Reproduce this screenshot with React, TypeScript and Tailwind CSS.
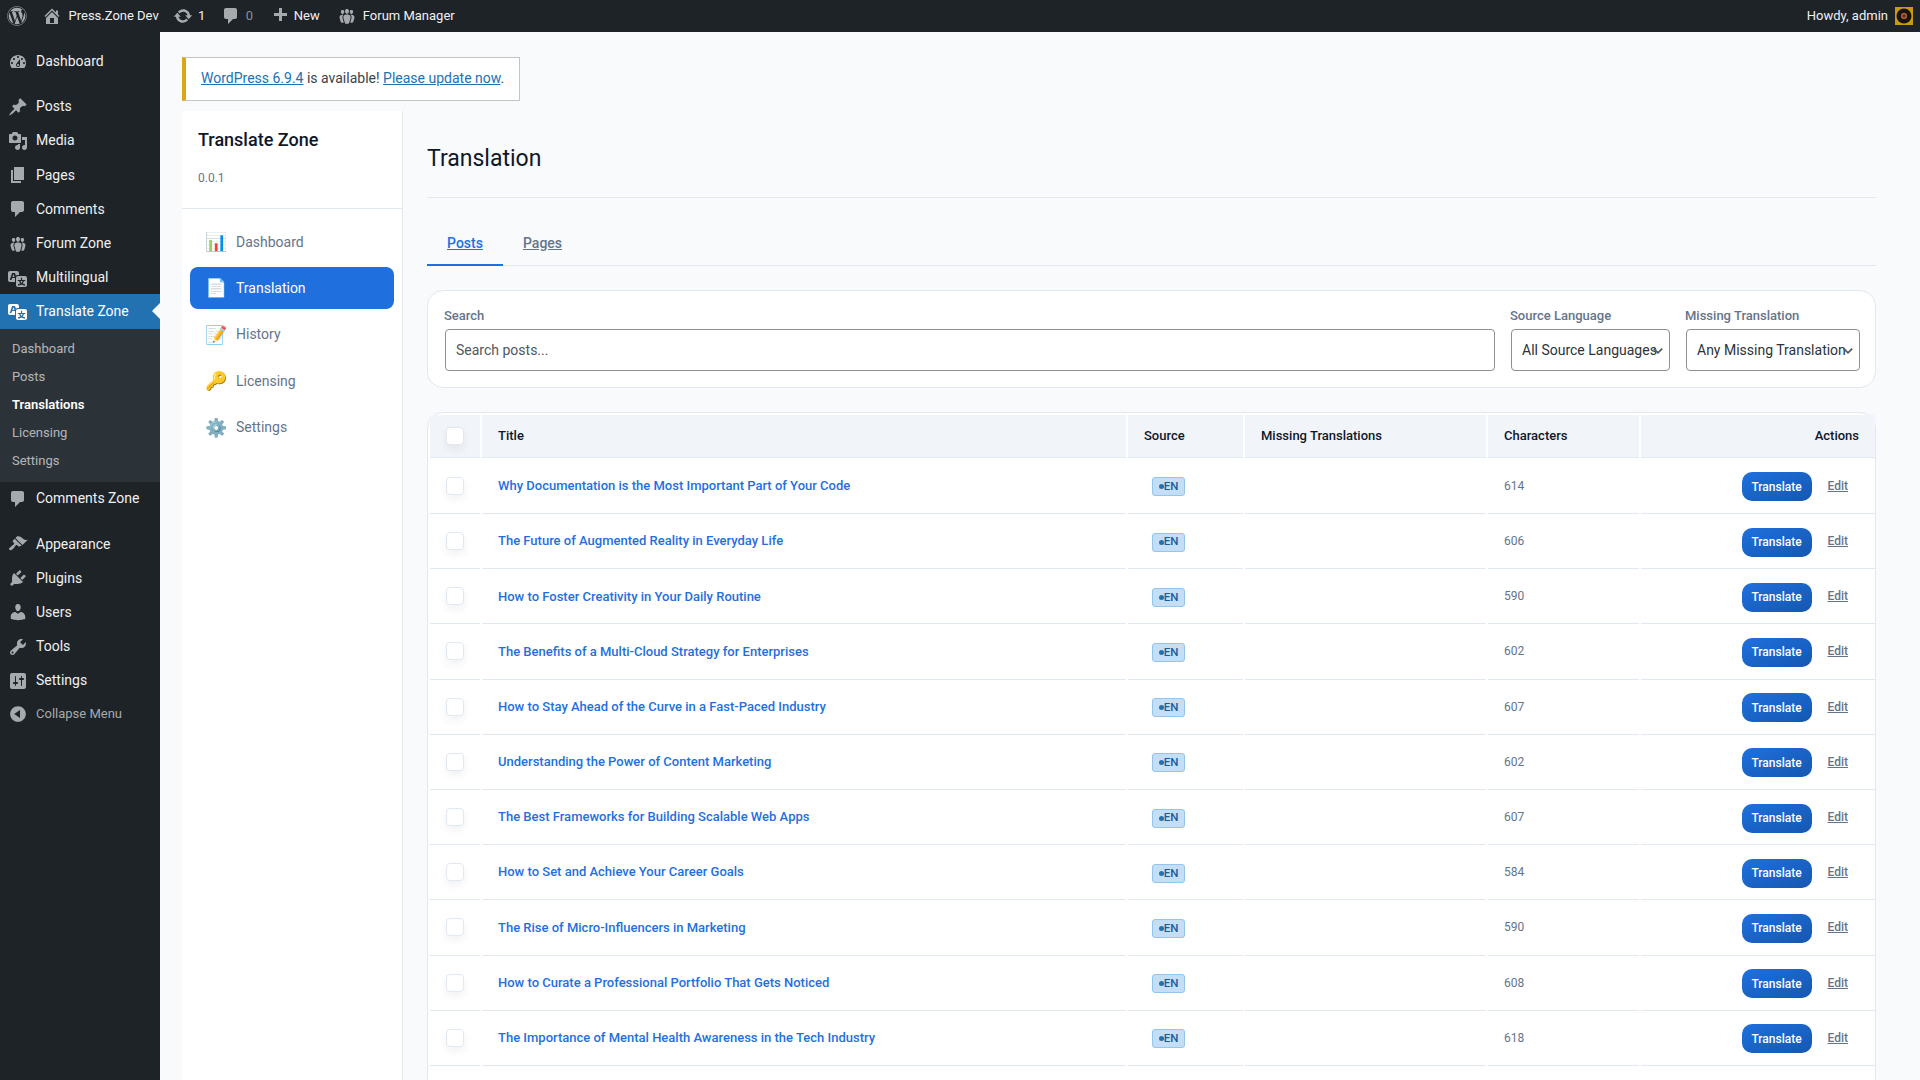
import React from 'react';
import { FaWordpress } from 'react-icons/fa';

// dashicons, 20x20 viewBox
const icons: Record<string, string> = {
  dashboard: 'M3.76 16h12.48c1.1-1.37 1.76-3.11 1.76-5 0-4.42-3.58-8-8-8s-8 3.58-8 8c0 1.89.66 3.63 1.76 5zM10 4c.55 0 1 .45 1 1s-.45 1-1 1-1-.45-1-1 .45-1 1-1zM6 6c.55 0 1 .45 1 1s-.45 1-1 1-1-.45-1-1 .45-1 1-1zm8 0c.55 0 1 .45 1 1s-.45 1-1 1-1-.45-1-1 .45-1 1-1zm-5.37 5.55L12 7v6c0 1.1-.9 2-2 2s-2-.9-2-2c0-.57.24-1.08.63-1.45zM4 10c.55 0 1 .45 1 1s-.45 1-1 1-1-.45-1-1 .45-1 1-1zm12 0c.55 0 1 .45 1 1s-.45 1-1 1-1-.45-1-1 .45-1 1-1zm-5 3c0-.55-.45-1-1-1s-1 .45-1 1 .45 1 1 1 1-.45 1-1z',
  pin: 'M10.44 3.02l1.82-1.82 6.36 6.35-1.83 1.82c-1.05-.68-2.48-.57-3.41.36l-.75.75c-.92.93-1.04 2.35-.35 3.41l-1.83 1.82-2.41-2.41-2.8 2.79c-.42.42-3.38 2.71-3.8 2.29s1.86-3.39 2.28-3.81l2.79-2.79L4.1 9.36l1.83-1.82c1.05.69 2.48.57 3.4-.36l.75-.75c.93-.92 1.05-2.35.36-3.41z',
  media: 'M13 11V4c0-.55-.45-1-1-1h-1.67L9 1H5L3.67 3H2c-.55 0-1 .45-1 1v7c0 .55.45 1 1 1h10c.55 0 1-.45 1-1zM7 4.5c1.38 0 2.5 1.12 2.5 2.5S8.38 9.5 7 9.5 4.5 8.38 4.5 7 5.62 4.5 7 4.5zM14 6h5v10.5c0 1.38-1.12 2.5-2.5 2.5S14 17.88 14 16.5s1.12-2.5 2.5-2.5c.17 0 .34.02.5.05V9h-3V6zm-4 8.05V13h2v3.5c0 1.38-1.12 2.5-2.5 2.5S7 17.88 7 16.5 8.12 14 9.5 14c.17 0 .34.02.5.05z',
  page: 'M6 15V2h10v13H6zm-1 1h8v2H3V5h2v11z',
  comment: 'M5 2h9c1.1 0 2 .9 2 2v7c0 1.1-.9 2-2 2h-2l-5 5v-5H5c-1.1 0-2-.9-2-2V4c0-1.1.9-2 2-2z',
  groups: 'M8.03 4.46c-.29 1.28.55 3.46 1.97 3.46 1.41 0 2.25-2.18 1.96-3.46-.22-.98-1.08-1.63-1.96-1.5-.88-.13-1.74.52-1.97 1.5zm-4.13.9c-.25 1.08.47 2.93 1.67 2.93s1.92-1.85 1.67-2.93c-.19-.83-.92-1.39-1.67-1.28-.75-.11-1.48.45-1.67 1.28zm8.86 0c-.25 1.08.47 2.93 1.66 2.93 1.2 0 1.92-1.85 1.67-2.93-.19-.83-.92-1.39-1.67-1.28-.74-.11-1.47.45-1.66 1.28zm-.59 11.43l1.25-4.3C14.2 10 12.71 8.47 10 8.47c-2.72 0-4.21 1.53-3.44 4.02l1.26 4.3C8.05 17.51 9 18 10 18c.98 0 1.94-.49 2.17-1.21zm-6.1-7.63c-.49.67-.96 1.83-.42 3.59l1.12 3.79c-.34.2-.77.31-1.2.31-.85 0-1.65-.41-1.85-1.03l-1.07-3.65c-.65-2.11.61-3.4 2.92-3.4.27 0 .54.02.79.06-.1.1-.2.22-.29.33zm8.35-.39c2.31 0 3.58 1.29 2.92 3.4l-1.07 3.65c-.2.62-1 1.03-1.85 1.03-.43 0-.86-.11-1.2-.31l1.11-3.77c.55-1.78.08-2.94-.42-3.61-.08-.11-.18-.23-.28-.33.25-.04.51-.06.79-.06z',
  translation: 'M11 7H9.49c-.63 0-1.25.3-1.59.7L7 5H4.13l-2.39 7h1.69l.74-2H7v4H2c-1.1 0-2-.9-2-2V5c0-1.1.9-2 2-2h7c1.1 0 2 .9 2 2v2zM6.51 9H4.49l1-2.93zM10 8h7c1.1 0 2 .9 2 2v7c0 1.1-.9 2-2 2h-7c-1.1 0-2-.9-2-2v-7c0-1.1.9-2 2-2zm7.25 5v-1.08h-3.17V9.75h-1.16v2.17H9.75V13h1.28c.11.85.56 1.85 1.28 2.62-.87.36-1.89.62-2.31.62-.01.02.22.97.2 1.46.84 0 2.21-.5 3.28-1.15 1.09.65 2.48 1.15 3.34 1.15-.02-.49.2-1.44.2-1.46-.43 0-1.49-.26-2.38-.63.7-.77 1.14-1.77 1.25-2.61h1.36zm-3.81 1.93c-.5-.46-.85-1.13-1.01-1.93h2.09c-.17.8-.51 1.47-1 1.93l-.04.03s-.03-.02-.04-.03z',
  appearance: 'M14.48 11.06L7.41 3.99l1.5-1.5c.5-.56 2.3-.47 3.51.32 1.21.8 1.43 1.28 2.91 2.1 1.18.64 2.45 1.26 4.45.85zm-.71.71L6.7 4.7 4.93 6.47c-.39.39-.39 1.02 0 1.41l1.06 1.06c.39.39.39 1.03 0 1.42-.6.6-1.43 1.11-2.21 1.69-.35.26-.7.53-1.01.84C1.43 13.23.4 14.84 1.4 15.84c.99.99 2.6-.03 3.95-1.38.31-.31.58-.66.84-1.01.58-.78 1.09-1.61 1.69-2.21.39-.39 1.02-.39 1.41 0l1.06 1.06c.39.39 1.02.39 1.41 0z',
  plugins: 'M13.11 4.36L9.87 7.6 8 5.73l3.24-3.24c.35-.34 1.05-.2 1.56.32.52.51.66 1.21.31 1.55zm-8 1.77l.91-1.12 9.01 9.01-1.19.84c-.71.71-2.63 1.16-3.82 1.16H6.14L4.9 17.26c-.59.59-1.54.59-2.12 0-.59-.58-.59-1.53 0-2.12l1.24-1.24v-3.88c0-1.13.4-3.19 1.09-3.89zm7.26 3.97l3.24-3.24c.34-.35 1.04-.21 1.55.31.52.51.66 1.21.31 1.55l-3.24 3.25z',
  users: 'M10 9.25c-2.27 0-2.73-3.44-2.73-3.44C7 4.02 7.82 2 9.97 2c2.16 0 2.98 2.02 2.71 3.81 0 0-.41 3.44-2.68 3.44zm0 2.57L12.72 10c2.39 0 4.52 2.33 4.52 4.53v2.49s-3.65 1.13-7.24 1.13c-3.65 0-7.24-1.13-7.24-1.13v-2.49c0-2.25 1.94-4.48 4.47-4.48z',
  tools: 'M16.68 9.77c-1.34 1.34-3.3 1.67-4.95.99l-5.41 6.52c-.99.99-2.59.99-3.58 0s-.99-2.59 0-3.57l6.52-5.42c-.68-1.65-.35-3.61.99-4.95 1.28-1.28 3.12-1.62 4.72-1.06l-2.89 2.89 2.82 2.82 2.86-2.87c.53 1.58.18 3.39-1.08 4.65zM3.81 16.21c.4.39 1.04.39 1.43 0 .4-.4.4-1.04 0-1.43-.39-.4-1.03-.4-1.43 0-.39.39-.39 1.03 0 1.43z',
  settings: 'M18 16V4c0-1.1-.9-2-2-2H4c-1.1 0-2 .9-2 2v12c0 1.1.9 2 2 2h12c1.1 0 2-.9 2-2zM8 11h1c.55 0 1 .45 1 1s-.45 1-1 1H8v1.5c0 .28-.22.5-.5.5s-.5-.22-.5-.5V13H6c-.55 0-1-.45-1-1s.45-1 1-1h1V5.5c0-.28.22-.5.5-.5s.5.22.5.5V11zm5-2h-1c-.55 0-1-.45-1-1s.45-1 1-1h1V5.5c0-.28.22-.5.5-.5s.5.22.5.5V7h1c.55 0 1 .45 1 1s-.45 1-1 1h-1v5.5c0 .28-.22.5-.5.5s-.5-.22-.5-.5V9z',
  collapse: 'M10 2.16c4.33 0 7.84 3.51 7.84 7.84s-3.51 7.84-7.84 7.84S2.16 14.33 2.16 10 5.71 2.16 10 2.16zm2 11.72V6.12L6.18 9.97z',
  home: 'M16 8.5l1.53 1.53-1.06 1.06L10 4.62l-6.47 6.47-1.06-1.06L10 2.5l4 4v-2h2v4zm-6-2.46l6 5.99V18H4v-5.97zM12 17v-5H8v5h4z',
  update: 'M10.2 3.28c3.53 0 6.43 2.61 6.92 6h2.08l-3.5 4-3.5-4h2.32c-.45-1.97-2.21-3.45-4.32-3.45-1.45 0-2.73.71-3.54 1.78L4.95 5.66C6.23 4.2 8.11 3.28 10.2 3.28zm-.4 13.44c-3.52 0-6.43-2.61-6.92-6H.8l3.5-4c1.17 1.33 2.33 2.67 3.5 4H5.48c.45 1.97 2.21 3.45 4.32 3.45 1.45 0 2.73-.71 3.54-1.78l1.71 1.95c-1.28 1.46-3.15 2.38-5.25 2.38z',
  plus: 'M17 7v3h-5v5H9v-5H4V7h5V2h3v5h5z',
};

function Dash({ name, className }: { name: string; className: string }) {
  return (
    <svg viewBox="0 0 20 20" fill="currentColor" className={className}>
      <path d={icons[name]} />
    </svg>
  );
}

const menuTop = [{ icon: 'dashboard', label: 'Dashboard' }];
const menuContent = [
  { icon: 'pin', label: 'Posts' },
  { icon: 'media', label: 'Media' },
  { icon: 'page', label: 'Pages' },
  { icon: 'comment', label: 'Comments' },
  { icon: 'groups', label: 'Forum Zone' },
  { icon: 'translation', label: 'Multilingual' },
];
const menuAdmin = [
  { icon: 'appearance', label: 'Appearance' },
  { icon: 'plugins', label: 'Plugins' },
  { icon: 'users', label: 'Users' },
  { icon: 'tools', label: 'Tools' },
  { icon: 'settings', label: 'Settings' },
];
const subMenu = ['Dashboard', 'Posts', 'Translations', 'Licensing', 'Settings'];

const pluginNav = [
  { emoji: '📊', label: 'Dashboard' },
  { emoji: '📄', label: 'Translation', active: true },
  { emoji: '📝', label: 'History' },
  { emoji: '🔑', label: 'Licensing' },
  { emoji: '⚙️', label: 'Settings' },
];

const posts: [string, number][] = [
  ['Why Documentation is the Most Important Part of Your Code', 614],
  ['The Future of Augmented Reality in Everyday Life', 606],
  ['How to Foster Creativity in Your Daily Routine', 590],
  ['The Benefits of a Multi-Cloud Strategy for Enterprises', 602],
  ['How to Stay Ahead of the Curve in a Fast-Paced Industry', 607],
  ['Understanding the Power of Content Marketing', 602],
  ['The Best Frameworks for Building Scalable Web Apps', 607],
  ['How to Set and Achieve Your Career Goals', 584],
  ['The Rise of Micro-Influencers in Marketing', 590],
  ['How to Curate a Professional Portfolio That Gets Noticed', 608],
  ['The Importance of Mental Health Awareness in the Tech Industry', 618],
];

function MenuItem({ icon, label }: { icon: string; label: string }) {
  return (
    <div className="flex h-[34.2px] items-center text-[14px] text-[#f0f0f1]">
      <Dash name={icon} className="ml-[8px] h-5 w-5 text-[#a7aaad]" />
      <span className="ml-[8px]">{label}</span>
    </div>
  );
}

function Select({ label, value, className }: { label: string; value: string; className: string }) {
  return (
    <div className={className}>
      <div className="text-[13px] leading-[16px] font-medium text-[#64748b]">{label}</div>
      <div className="relative mt-[5px] ml-px">
        <div className="flex h-[42px] items-center overflow-hidden rounded-[4px] border border-[#8c8f94] bg-white pl-[10px] text-[14px] whitespace-nowrap text-[#2c3338]">
          {value}
        </div>
        <svg viewBox="0 0 20 20" fill="none" stroke="#50575e" strokeWidth="2.4" className="absolute top-[14px] right-[5px] h-[14px] w-[14px]">
          <path d="M4 8l6 6 6-6" />
        </svg>
      </div>
    </div>
  );
}

function Check() {
  return <div className="mx-auto h-[18px] w-[18px] rounded-[4px] border border-[#e2e8f0] bg-white shadow-[0_4px_8px_rgba(15,23,42,0.06)]" />;
}

export default function App() {
  return (
    <div className="flex h-screen flex-col overflow-hidden bg-[#f8fafc] font-['Roboto',sans-serif]">
      {/* Admin bar */}
      <header className="flex h-[32px] shrink-0 items-center bg-[#1d2327] text-[13px] text-[#f0f0f1]">
        <FaWordpress className="ml-[7px] h-[20px] w-[20px] text-[#a7aaad]" />
        <Dash name="home" className="ml-[15px] h-5 w-5 text-[#a7aaad]" />
        <span className="ml-[6.5px]">Press.Zone Dev</span>
        <Dash name="update" className="ml-[14.3px] h-5 w-5 text-[#a7aaad]" />
        <span className="ml-[5px]">1</span>
        <Dash name="comment" className="ml-[16px] h-5 w-5 text-[#a7aaad]" />
        <span className="ml-[4.3px] text-[#8c8f94]">0</span>
        <Dash name="plus" className="ml-[17.5px] h-5 w-5 text-[#a7aaad]" />
        <span className="ml-[3.4px]">New</span>
        <Dash name="groups" className="ml-[17px] h-5 w-5 text-[#a7aaad]" />
        <span className="ml-[6px]">Forum Manager</span>
        <span className="mr-[7px] ml-auto">Howdy, admin</span>
        <svg viewBox="0 0 18 18" className="mr-[7px] h-[18px] w-[18px]">
          <rect width="18" height="18" fill="#c79a12" />
          <circle cx="9" cy="9" r="7.5" fill="#17140f" />
          <circle cx="9" cy="9" r="3.2" fill="#a0522d" />
          <circle cx="9" cy="9" r="1" fill="#222" />
        </svg>
      </header>

      <div className="flex min-h-0 flex-1">
        {/* WP sidebar */}
        <aside className="w-[160px] shrink-0 bg-[#1d2327]">
          <div className="mt-[12.5px]">
            {menuTop.map((m) => <MenuItem key={m.label} {...m} />)}
          </div>
          <div className="mt-[11px]">
            {menuContent.map((m) => <MenuItem key={m.label} {...m} />)}
          </div>
          <div className="relative -mt-px flex h-[35px] items-center bg-[#2271b1] text-[14px] text-white">
            <Dash name="translation" className="ml-[8px] h-5 w-5 text-white" />
            <span className="ml-[8px]">Translate Zone</span>
            <div className="absolute top-[9px] right-0 h-0 w-0 border-y-[8px] border-r-[8px] border-y-transparent border-r-[#f8fafc]" />
          </div>
          <div className="bg-[#2c3338] pt-[6px] pb-[7px] text-[13px]">
            {subMenu.map((s) => (
              <div key={s} className={`flex h-[28px] items-center pl-[12px] ${s === 'Translations' ? 'font-semibold text-white' : 'text-[#f0f0f1b3]'}`}>
                {s}
              </div>
            ))}
          </div>
          <MenuItem icon="comment" label="Comments Zone" />
          <div className="mt-[11px]">
            {menuAdmin.map((m) => <MenuItem key={m.label} {...m} />)}
          </div>
          <div className="flex h-[31.5px] items-center text-[13px] text-[#a7aaad]">
            <Dash name="collapse" className="ml-[8px] h-5 w-5 text-[#a7aaad]" />
            <span className="ml-[8px]">Collapse Menu</span>
          </div>
        </aside>

        {/* Content */}
        <main className="min-w-0 flex-1 pt-[25px] pl-[22px]">
          <div className="w-fit border border-l-4 border-[#c3c4c7] border-l-[#dba617] bg-white pt-[10px] pr-[15px] pb-[12px] pl-[15px] text-[14px] leading-[20px] text-[#3c434a]">
            <a href="#" className="text-[#2271b1] underline">WordPress 6.9.4</a> is available! <a href="#" className="text-[#2271b1] underline">Please update now</a>.
          </div>

          <div className="mt-[10px] flex">
            {/* Plugin nav */}
            <nav className="h-[1000px] w-[221px] shrink-0 border-r border-[#e2e8f0] bg-white">
              <div className="h-[98px] border-b border-[#e2e8f0] px-[16px] pt-[16px]">
                <div className="text-[18px] leading-[26px] font-medium text-[#0f172a]">Translate Zone</div>
                <div className="mt-[18px] text-[12px] leading-[14px] text-[#64748b]">0.0.1</div>
              </div>
              <div className="flex flex-col gap-[4.4px] px-[8px] pt-[12px]">
                {pluginNav.map((n) => (
                  <div key={n.label} className={`flex h-[42px] items-center rounded-[8px] pl-[15px] text-[14px] ${n.active ? 'bg-[#1f70de] text-white' : 'text-[#64748b]'}`}>
                    <span className="w-[31px] text-[18px] leading-none">{n.emoji}</span>
                    <span>{n.label}</span>
                  </div>
                ))}
              </div>
            </nav>

            {/* Page body */}
            <div className="w-[1473px] shrink-0 pl-[24px]">
              <div className="border-b border-[#e2e8f0] pt-[33px] pb-[23px]">
                <h1 className="text-[23px] leading-[30px] font-normal text-[#0f172a]">Translation</h1>
              </div>

              <div className="mt-[24px] flex h-[44px] border-b border-[#e2e8f0] text-[14px] font-medium">
                <a href="#" className="-mb-px flex w-[76px] items-center justify-center border-b-2 border-[#1f70de] text-[#1f70de] underline">Posts</a>
                <a href="#" className="ml-[20px] flex items-center pb-px text-[#64748b] underline">Pages</a>
              </div>

              {/* Filters */}
              <div className="mt-[24px] flex h-[98px] rounded-[16px] border border-[#e2e8f0] bg-white pt-[17px] pl-[16px]">
                <div className="w-[1051px]">
                  <div className="text-[13px] leading-[16px] font-medium text-[#64748b]">Search</div>
                  <input
                    placeholder="Search posts..."
                    className="mt-[5px] ml-px h-[42px] w-[1050px] rounded-[4px] border border-[#8c8f94] bg-white px-[10px] text-[14px] text-[#2c3338] placeholder:text-[#50575e]"
                  />
                </div>
                <Select label="Source Language" value="All Source Languages" className="ml-[15px] w-[160px]" />
                <Select label="Missing Translation" value="Any Missing Translation" className="ml-[15px] w-[175px]" />
              </div>

              {/* Table */}
              <div className="mt-[24px] rounded-t-[16px] border border-[#e2e8f0] bg-white pt-[2px] pb-[60px]">
                <table className="w-[1449px] table-fixed border-separate [border-spacing:2px_0] text-[13px]">
                  <colgroup>
                    <col className="w-[50px]" />
                    <col className="w-[644px]" />
                    <col className="w-[115px]" />
                    <col className="w-[241px]" />
                    <col className="w-[151px]" />
                    <col />
                  </colgroup>
                  <thead>
                    <tr className="h-[43px] font-medium text-[#0f172a]">
                      <th className="border-b border-[#e2e8f0] bg-[#f1f5f9]"><Check /></th>
                      <th className="border-b border-[#e2e8f0] bg-[#f1f5f9] pl-[16px] text-left font-medium">Title</th>
                      <th className="border-b border-[#e2e8f0] bg-[#f1f5f9] pl-[16px] text-left font-medium">Source</th>
                      <th className="border-b border-[#e2e8f0] bg-[#f1f5f9] pl-[16px] text-left font-medium">Missing Translations</th>
                      <th className="border-b border-[#e2e8f0] bg-[#f1f5f9] pl-[16px] text-left font-medium">Characters</th>
                      <th className="border-b border-[#e2e8f0] bg-[#f1f5f9] pr-[16px] text-right font-medium">Actions</th>
                    </tr>
                  </thead>
                  <tbody>
                    {posts.map(([title, chars]) => (
                      <tr key={title} className="h-[55.2px] first:h-[56px]">
                        <td className="border-b border-[#e2e8f0]"><Check /></td>
                        <td className="border-b border-[#e2e8f0] pl-[16px] font-medium text-[#1f70de]">{title}</td>
                        <td className="border-b border-[#e2e8f0] pl-[24px]">
                          <span className="inline-flex h-[19px] w-[33px] items-center justify-center rounded-[3px] border border-[#93c5ed] bg-[#c3def5] text-[11.5px] font-medium text-[#1d5c99]">
                            <span className="h-[5px] w-[5px] rounded-full bg-[#2271b1]" />EN
                          </span>
                        </td>
                        <td className="border-b border-[#e2e8f0]" />
                        <td className="border-b border-[#e2e8f0] pl-[16px] text-[12px] text-[#64748b]">{chars}</td>
                        <td className="border-b border-[#e2e8f0] pr-[27px] text-right">
                          <button className="relative top-px h-[29px] w-[70px] rounded-[10px] bg-gradient-to-br from-[#1f70de] to-[#1557b0] text-[12px] font-medium text-white">Translate</button>
                          <a href="#" className="ml-[16px] text-[12px] font-medium text-[#64748b] underline">Edit</a>
                        </td>
                      </tr>
                    ))}
                  </tbody>
                </table>
              </div>
            </div>
          </div>
        </main>
      </div>
    </div>
  );
}
